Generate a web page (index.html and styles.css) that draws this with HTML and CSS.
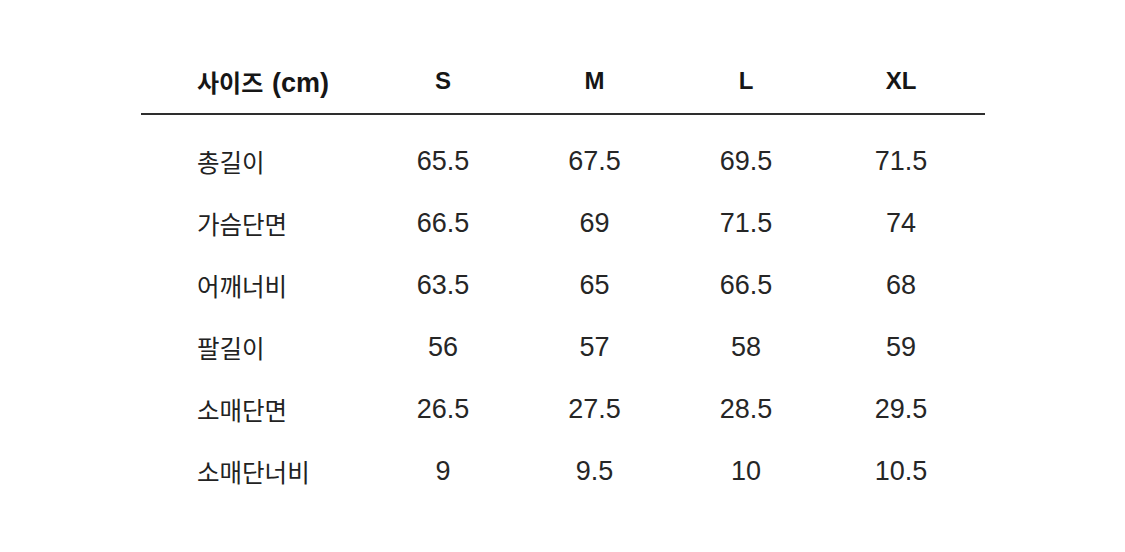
FILE: index.html
```html
<!DOCTYPE html>
<html lang="ko">
<head>
<meta charset="utf-8">
<link rel="stylesheet" href="styles.css">
</head>
<body>
<div class="size-table">
  <div class="row head">
    <div class="label">사이즈 <span class="unit">(cm)</span></div>
    <div class="cell">S</div>
    <div class="cell">M</div>
    <div class="cell">L</div>
    <div class="cell">XL</div>
  </div>
  <div class="body">
    <div class="row">
      <div class="label">총길이</div>
      <div class="cell">65.5</div>
      <div class="cell">67.5</div>
      <div class="cell">69.5</div>
      <div class="cell">71.5</div>
    </div>
    <div class="row">
      <div class="label">가슴단면</div>
      <div class="cell">66.5</div>
      <div class="cell">69</div>
      <div class="cell">71.5</div>
      <div class="cell">74</div>
    </div>
    <div class="row">
      <div class="label">어깨너비</div>
      <div class="cell">63.5</div>
      <div class="cell">65</div>
      <div class="cell">66.5</div>
      <div class="cell">68</div>
    </div>
    <div class="row">
      <div class="label">팔길이</div>
      <div class="cell">56</div>
      <div class="cell">57</div>
      <div class="cell">58</div>
      <div class="cell">59</div>
    </div>
    <div class="row">
      <div class="label">소매단면</div>
      <div class="cell">26.5</div>
      <div class="cell">27.5</div>
      <div class="cell">28.5</div>
      <div class="cell">29.5</div>
    </div>
    <div class="row">
      <div class="label">소매단너비</div>
      <div class="cell">9</div>
      <div class="cell">9.5</div>
      <div class="cell">10</div>
      <div class="cell">10.5</div>
    </div>
  </div>
</div>
</body>
</html>
```
FILE: styles.css
```css
html, body {
  margin: 0;
  padding: 0;
  background: #ffffff;
}
body {
  font-family: "Liberation Sans", "Noto Sans CJK KR", Arial, sans-serif;
  color: #262626;
}
.size-table {
  width: 844px;
  margin: 49px 0 0 141px;
}
.row {
  display: grid;
  grid-template-columns: 226px 152px 151px 152px 158px;
  height: 62px;
  align-items: center;
}
.row.head {
  height: 64px;
  border-bottom: 2px solid #2e2e2e;
  font-weight: 700;
  font-size: 24px;
  color: #161616;
}
.row.head .label {
  font-size: 24px;
  color: #161616;
}
.row.head .unit {
  font-size: 27px;
  margin-left: 2px;
}
.body {
  padding-top: 15px;
}
.label {
  padding-left: 56px;
  white-space: nowrap;
  font-size: 24.5px;
  color: #222222;
}
.body .cell {
  font-size: 27px;
}
.cell {
  text-align: center;
}
```
